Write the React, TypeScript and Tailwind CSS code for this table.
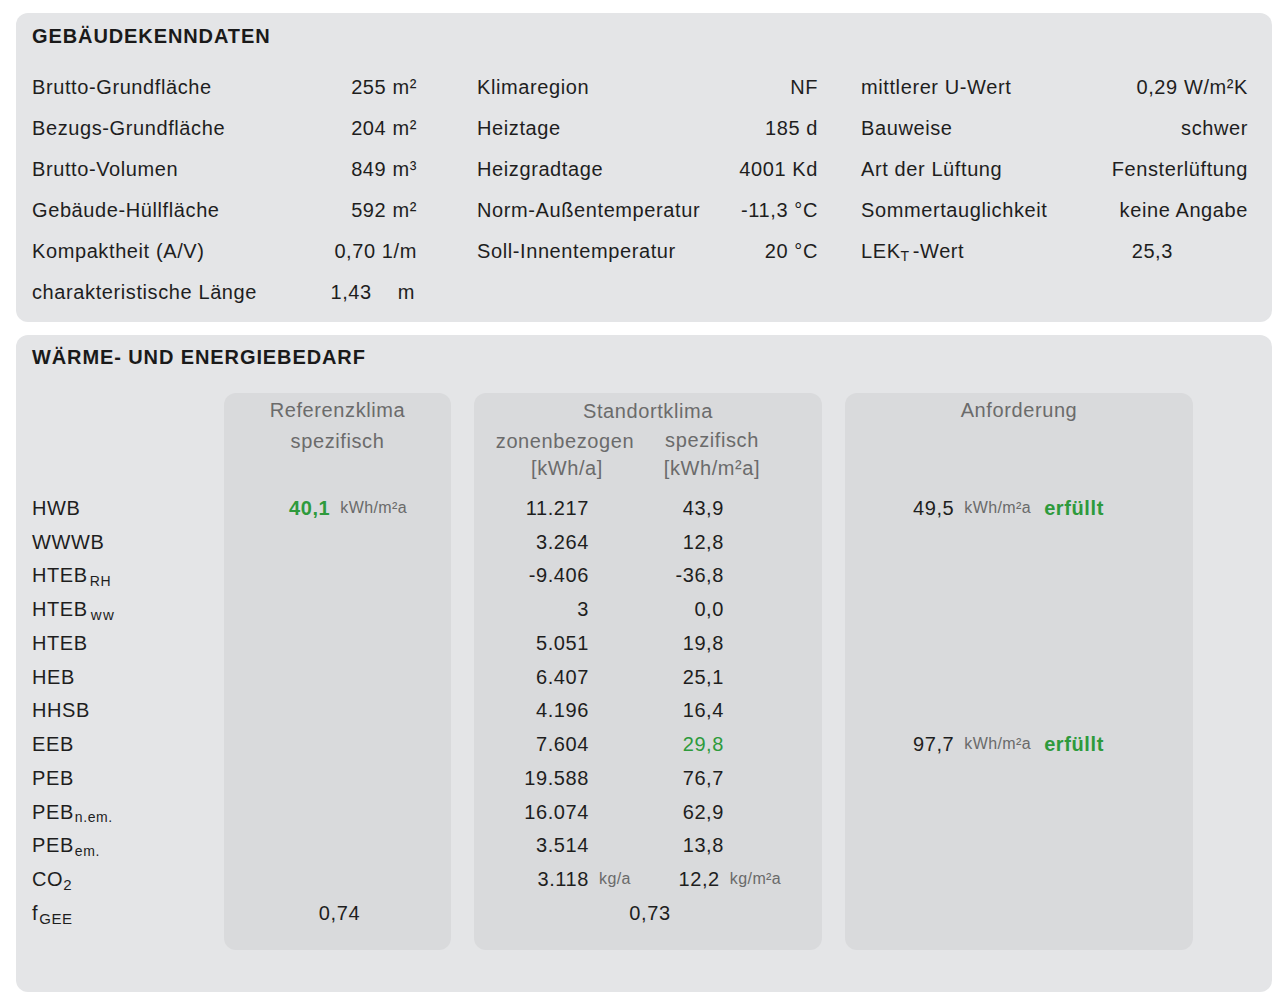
import React from "react";

type KV = { label: React.ReactNode; value: React.ReactNode; valueClass?: string };

const col1: KV[] = [
  { label: "Brutto-Grundfläche", value: "255 m²" },
  { label: "Bezugs-Grundfläche", value: "204 m²" },
  { label: "Brutto-Volumen", value: "849 m³" },
  { label: "Gebäude-Hüllfläche", value: "592 m²" },
  { label: "Kompaktheit (A/V)", value: "0,70 1/m" },
  {
    label: "charakteristische Länge",
    value: (
      <>
        1,43<span className="ml-[26px]">m</span>
      </>
    ),
    valueClass: "pr-[2px]",
  },
];

const col2: KV[] = [
  { label: "Klimaregion", value: "NF" },
  { label: "Heiztage", value: "185 d" },
  { label: "Heizgradtage", value: "4001 Kd" },
  { label: "Norm-Außentemperatur", value: "-11,3 °C" },
  { label: "Soll-Innentemperatur", value: "20 °C" },
];

const col3: KV[] = [
  { label: "mittlerer U-Wert", value: "0,29 W/m²K" },
  { label: "Bauweise", value: "schwer" },
  { label: "Art der Lüftung", value: "Fensterlüftung" },
  { label: "Sommertauglichkeit", value: "keine Angabe" },
  {
    label: (
      <>
        LEK<sub className="text-[14px] mr-[3px]">T</sub>-Wert
      </>
    ),
    value: "25,3",
    valueClass: "pr-[75px]",
  },
];

function KVColumn({ items, width, className = "" }: { items: KV[]; width: string; className?: string }) {
  return (
    <div className={`flex flex-col ${width} ${className}`}>
      {items.map((it, i) => (
        <div key={i} className="h-[41px] flex items-center justify-between">
          <span>{it.label}</span>
          <span className={`text-right ${it.valueClass ?? ""}`}>{it.value}</span>
        </div>
      ))}
    </div>
  );
}

const Unit = ({ children }: { children: React.ReactNode }) => (
  <span className="text-[16px] tracking-[0.4px] text-[#6a6a6a] ml-[10px]">{children}</span>
);

const labels: React.ReactNode[] = [
  "HWB",
  "WWWB",
  <>HTEB<sub className="text-[14px] ml-[2px]">RH</sub></>,
  <>HTEB<sub className="text-[15px] ml-[3px] tracking-[1.5px]">ww</sub></>,
  "HTEB",
  "HEB",
  "HHSB",
  "EEB",
  "PEB",
  <>PEB<sub className="text-[14px] ml-[1px]">n.em.</sub></>,
  <>PEB<sub className="text-[14px] ml-[1px]">em.</sub></>,
  <>CO<sub className="text-[15px]">2</sub></>,
  <>f<sub className="text-[15px] ml-[1px]">GEE</sub></>,
];

const zonen = ["11.217", "3.264", "-9.406", "3", "5.051", "6.407", "4.196", "7.604", "19.588", "16.074", "3.514", "3.118"];
const spez = ["43,9", "12,8", "-36,8", "0,0", "19,8", "25,1", "16,4", "29,8", "76,7", "62,9", "13,8", "12,2"];

const ROW = "h-[33.75px] flex items-center";

export default function App() {
  return (
    <div
      className="min-h-screen bg-white pt-[13px] pl-[16px] text-[20px] tracking-[0.6px] text-[#1e1e1e] leading-[24px]"
      style={{ fontFamily: '"Liberation Sans", Arial, sans-serif' }}
    >
      {/* Gebäudekenndaten */}
      <section className="w-[1256px] rounded-[12px] bg-[#e4e5e7] pt-[10px] pb-[10px] px-[16px]">
        <h2 className="h-[26px] leading-[26px] font-bold tracking-[0.9px] text-[#1a1a1a]">GEBÄUDEKENNDATEN</h2>
        <div className="mt-[17px] flex">
          <KVColumn items={col1} width="w-[385px]" />
          <KVColumn items={col2} width="w-[341px]" className="ml-[60px]" />
          <KVColumn items={col3} width="w-[387px]" className="ml-[43px]" />
        </div>
      </section>

      {/* Wärme- und Energiebedarf */}
      <section className="mt-[13px] w-[1256px] rounded-[12px] bg-[#e4e5e7] pt-[9px] pb-[42px] px-[16px]">
        <h2 className="h-[26px] leading-[26px] font-bold tracking-[0.9px] text-[#1a1a1a]">WÄRME- UND ENERGIEBEDARF</h2>
        <div className="mt-[23px] flex">
          {/* labels */}
          <div className="w-[192px] flex flex-col pt-[98px]">
            {labels.map((l, i) => (
              <div key={i} className={ROW}>
                <span>{l}</span>
              </div>
            ))}
          </div>

          {/* Referenzklima */}
          <div className="w-[227px] rounded-[12px] bg-[#d9dadc] pb-[20px] flex flex-col">
            <div className="h-[98px] pt-[5px] text-center text-[#6b6b6b]">
              <div className="h-[24px]">Referenzklima</div>
              <div className="h-[24px] mt-[7px]">spezifisch</div>
            </div>
            <div className={`${ROW} pl-[65px]`}>
              <span className="font-bold text-[#2e9a3c]">40,1</span>
              <Unit>kWh/m²a</Unit>
            </div>
            {Array.from({ length: 11 }).map((_, i) => (
              <div key={i} className={ROW} />
            ))}
            <div className={`${ROW} justify-center pl-[4px]`}>0,74</div>
          </div>

          {/* Standortklima */}
          <div className="ml-[23px] w-[348px] rounded-[12px] bg-[#d9dadc] pb-[20px] flex flex-col">
            <div className="h-[98px] pt-[6px] text-[#6b6b6b]">
              <div className="h-[24px] text-center">Standortklima</div>
              <div className="flex mt-[6px]">
                <div className="w-[182px] text-center">
                  <div className="h-[24px]">zonenbezogen</div>
                  <div className="h-[24px] mt-[3px] pl-[4px]">[kWh/a]</div>
                </div>
                <div className="w-[112px] text-center">
                  <div className="h-[24px] -mt-[1px]">spezifisch</div>
                  <div className="h-[24px] mt-[4px]">[kWh/m²a]</div>
                </div>
              </div>
            </div>
            {zonen.map((z, i) => (
              <div key={i} className={ROW}>
                <span className="w-[115px] text-right">{z}</span>
                {i === 11 && <Unit>kg/a</Unit>}
                <span className={`text-right ${i === 11 ? "w-[89px]" : "w-[135px]"} ${i === 7 ? "text-[#2e9a3c]" : ""}`}>
                  {spez[i]}
                </span>
                {i === 11 && <Unit>kg/m²a</Unit>}
              </div>
            ))}
            <div className={`${ROW} justify-center pl-[4px]`}>0,73</div>
          </div>

          {/* Anforderung */}
          <div className="ml-[23px] w-[348px] rounded-[12px] bg-[#d9dadc] pb-[20px] flex flex-col">
            <div className="h-[98px] pt-[5px] text-center text-[#6b6b6b]">
              <div className="h-[24px]">Anforderung</div>
            </div>
            {Array.from({ length: 13 }).map((_, i) => (
              <div key={i} className={`${ROW} pl-[68px]`}>
                {(i === 0 || i === 7) && (
                  <>
                    <span>{i === 0 ? "49,5" : "97,7"}</span>
                    <Unit>kWh/m²a</Unit>
                    <span className="ml-[13px] font-bold text-[#2e9a3c]">erfüllt</span>
                  </>
                )}
              </div>
            ))}
          </div>
        </div>
      </section>
    </div>
  );
}
